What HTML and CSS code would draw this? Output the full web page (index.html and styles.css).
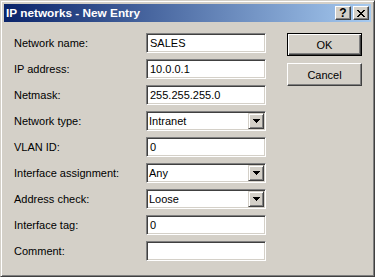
FILE: index.html
```html
<!DOCTYPE html>
<html>
<head>
<meta charset="utf-8">
<link rel="stylesheet" href="styles.css">
</head>
<body>
<div class="window">
  <div class="titlebar">
    <span class="title">IP networks - New Entry</span>
    <div class="tbuttons">
      <div class="tbtn help">?</div>
      <div class="tbtn close">
        <svg width="8" height="7" viewBox="0 0 8 7" shape-rendering="crispEdges">
          <path d="M0 0h2v1h-2zM6 0h2v1h-2zM1 1h2v1h-2zM5 1h2v1h-2zM2 2h4v1h-4zM3 3h2v1h-2zM2 4h4v1h-4zM1 5h2v1h-2zM5 5h2v1h-2zM0 6h2v1h-2zM6 6h2v1h-2z" fill="#000"/>
        </svg>
      </div>
    </div>
  </div>
  <div class="content">
    <div class="form">
      <div class="label">Network name:</div><div class="field">SALES</div>
      <div class="label">IP address:</div><div class="field">10.0.0.1</div>
      <div class="label">Netmask:</div><div class="field">255.255.255.0</div>
      <div class="label">Network type:</div><div class="field select"><span class="val">Intranet</span><span class="drop"><svg class="tri" width="7" height="4" viewBox="0 0 7 4" shape-rendering="crispEdges"><path d="M0 0h7v1h-7zM1 1h5v1h-5zM2 2h3v1h-3zM3 3h1v1h-1z" fill="#000"/></svg></span></div>
      <div class="label">VLAN ID:</div><div class="field">0</div>
      <div class="label">Interface assignment:</div><div class="field select"><span class="val">Any</span><span class="drop"><svg class="tri" width="7" height="4" viewBox="0 0 7 4" shape-rendering="crispEdges"><path d="M0 0h7v1h-7zM1 1h5v1h-5zM2 2h3v1h-3zM3 3h1v1h-1z" fill="#000"/></svg></span></div>
      <div class="label">Address check:</div><div class="field select"><span class="val">Loose</span><span class="drop"><svg class="tri" width="7" height="4" viewBox="0 0 7 4" shape-rendering="crispEdges"><path d="M0 0h7v1h-7zM1 1h5v1h-5zM2 2h3v1h-3zM3 3h1v1h-1z" fill="#000"/></svg></span></div>
      <div class="label">Interface tag:</div><div class="field">0</div>
      <div class="label">Comment:</div><div class="field"></div>
    </div>
    <div class="buttons">
      <div class="btn default">OK</div>
      <div class="btn">Cancel</div>
    </div>
  </div>
</div>
</body>
</html>
```
FILE: styles.css
```css
html, body {
  margin: 0;
  padding: 0;
  background: #d4d0c8;
}
body {
  font-family: "Liberation Sans", Arial, sans-serif;
  font-size: 11px;
  color: #000;
}
.window {
  box-sizing: border-box;
  width: 375px;
  height: 277px;
  background: #d4d0c8;
  border: 1px solid;
  border-color: #d4d0c8 #404040 #404040 #d4d0c8;
  box-shadow: inset 1px 1px #fff, inset -1px -1px #808080;
  padding: 3px;
}
.titlebar {
  height: 18px;
  display: flex;
  align-items: center;
  justify-content: space-between;
  background: linear-gradient(to right, #0a246a, #a6caf0);
  padding: 0 2px 0 2px;
}
.title {
  color: #fff;
  font-weight: bold;
  font-size: 11.8px;
}
.tbuttons {
  display: flex;
  gap: 2px;
}
.tbtn {
  box-sizing: border-box;
  width: 16px;
  height: 14px;
  background: #d4d0c8;
  border: 1px solid;
  border-color: #fff #404040 #404040 #fff;
  box-shadow: inset -1px -1px #808080;
  display: flex;
  align-items: center;
  justify-content: center;
}
.help {
  font-weight: bold;
  font-size: 12px;
  line-height: 12px;
}
.close svg {
  display: block;
  margin-left: -1px;
}
.content {
  display: flex;
  align-items: flex-start;
  padding: 11px 0 0 10px;
}
.form {
  display: grid;
  grid-template-columns: 132px 120px;
  grid-auto-rows: 20px;
  row-gap: 6px;
}
.label {
  line-height: 20px;
  white-space: nowrap;
}
.field {
  box-sizing: border-box;
  height: 20px;
  background: #fff;
  border: 1px solid;
  border-color: #808080 #fff #fff #808080;
  box-shadow: inset 1px 1px #404040, inset -1px -1px #d4d0c8;
  padding: 0 3px;
  line-height: 18px;
  white-space: nowrap;
}
.select {
  display: flex;
  align-items: center;
  padding: 1px 1px 1px 2px;
}
.select .val {
  flex: 1;
  line-height: 16px;
}
.drop {
  box-sizing: border-box;
  width: 16px;
  height: 16px;
  background: #d4d0c8;
  border: 1px solid;
  border-color: #d4d0c8 #404040 #404040 #d4d0c8;
  box-shadow: inset 1px 1px #fff, inset -1px -1px #808080;
  display: flex;
  align-items: center;
  justify-content: center;
}
.tri {
  display: block;
}
.buttons {
  display: flex;
  flex-direction: column;
  gap: 7px;
  margin-left: 21px;
}
.btn {
  box-sizing: border-box;
  width: 75px;
  height: 23px;
  background: #d4d0c8;
  border: 1px solid;
  border-color: #fff #404040 #404040 #fff;
  box-shadow: inset -1px -1px #808080;
  display: flex;
  align-items: center;
  justify-content: center;
}
.btn.default {
  border: 1px solid #000;
  box-shadow: inset 1px 1px #fff, inset -1px -1px #404040, inset -2px -2px #808080;
}
```
